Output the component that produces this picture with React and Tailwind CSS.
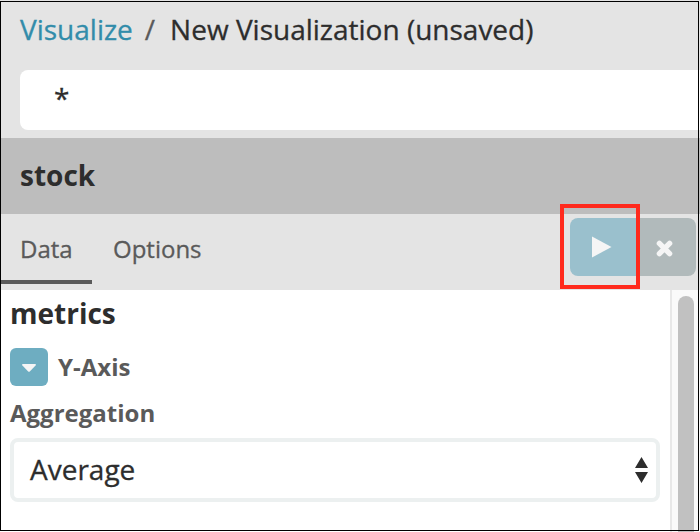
function Breadcrumb() {
  return (
    <div className="flex h-[70px] items-start pt-[9px] pl-5 text-[28px] leading-10 whitespace-pre [-webkit-text-stroke:0.3px]">
      <a className="text-[#328caa]">Visualize</a>
      <span className="ml-3 text-[#5a5a5a]">/</span>
      <span className="ml-[15px] text-[#2d2d2d]">New Visualization (unsaved)</span>
    </div>
  );
}

function Tabs() {
  return (
    <div className="flex h-[76px] items-start justify-between bg-[#e4e4e4] text-[24px] text-[#5a5a5a]">
      <div className="flex [-webkit-text-stroke:0.3px]">
        <div className="h-[70px] w-[92px] border-b-4 border-[#5a5a5a] pt-[15px] pl-5 leading-10">Data</div>
        <div className="pt-[15px] pl-[21px] leading-10">Options</div>
      </div>
      <div className="relative mt-1 mr-1 flex h-[58px] w-[126px] overflow-visible">
        <button className="flex w-[68px] items-center rounded-l-lg bg-[#9ac0cd] pl-[22px]">
          <svg width="20" height="22" viewBox="0 0 20 22" fill="#f5f5f5">
            <path d="M0 .5 19.5 11 0 21.5z" />
          </svg>
        </button>
        <button className="flex flex-1 items-center rounded-r-lg bg-[#b1babb] pt-[2px] pl-[18px]">
          <svg width="17" height="17" viewBox="0 0 17 17" stroke="#f5f5f5" strokeWidth="5.4" strokeLinecap="round">
            <path d="M3.4 3.4 13.6 13.6M13.6 3.4 3.4 13.6" />
          </svg>
        </button>
        <div className="absolute -top-[14px] -left-[10px] h-[85px] w-20 border-4 border-[#ff2a1d]" />
      </div>
    </div>
  );
}

function Metrics() {
  return (
    <div className="w-[670px] pt-[3px] pl-[10px]">
      <h2 className="text-[28px] leading-10 font-bold text-[#2d2d2d]">metrics</h2>
      <div className="mt-[15px] flex h-[38px] items-center text-[24px] font-bold text-[#5a5a5a]">
        <button className="flex h-[38px] w-[38px] items-center justify-center rounded-md bg-[#6eadc1]">
          <svg width="14" height="8" viewBox="0 0 14 8" fill="#f5f5f5" className="mt-[2px]">
            <path d="M.8 0h12.4q1.2.4.4 1.4L7.8 7.5q-.8.7-1.6 0L.4 1.4Q-.4.4.8 0z" />
          </svg>
        </button>
        <span className="ml-[10px]">Y-Axis</span>
      </div>
      <div className="mt-[7px] h-[45px] text-[24px] leading-10 font-bold text-[#5a5a5a]">Aggregation</div>
      <div className="flex h-16 w-[650px] items-center justify-between rounded-lg border-4 border-[#ecf0f0] pr-[8px] pl-4 text-[28px] text-[#2d2d2d]">
        <span className="pb-[2px] [-webkit-text-stroke:0.3px]">Average</span>
        <svg width="13" height="26" viewBox="0 0 13 26" fill="#2d2d2d">
          <path d="M6.5 0 13 11H0zM0 15h13L6.5 26z" />
        </svg>
      </div>
    </div>
  );
}

export default function App() {
  return (
    <div className="relative h-[532px] w-[700px] overflow-hidden bg-[#e4e4e4] font-['Open_Sans',sans-serif]">
      <Breadcrumb />
      <div className="ml-5 h-[60px] rounded-l-lg bg-white pt-[8px] pl-[34px] text-[28px] leading-10 text-[#2d2d2d] [-webkit-text-stroke:0.3px]">*</div>
      <div className="mt-2 h-[76px] bg-[#bdbdbd] pt-[17px] pl-5 text-[28px] leading-10 font-bold text-[#2d2d2d]">stock</div>
      <Tabs />
      <div className="flex h-[242px] bg-white">
        <Metrics />
        <div className="flex-1 border-l-2 border-[#e8e8e8] bg-[#fafafa] pt-[6px] pl-[6px]">
          <div className="h-[250px] w-4 rounded-t-full bg-[#c1c1c1]" />
        </div>
      </div>
      <div className="pointer-events-none absolute top-px right-px bottom-px left-0 border border-black" />
    </div>
  );
}
